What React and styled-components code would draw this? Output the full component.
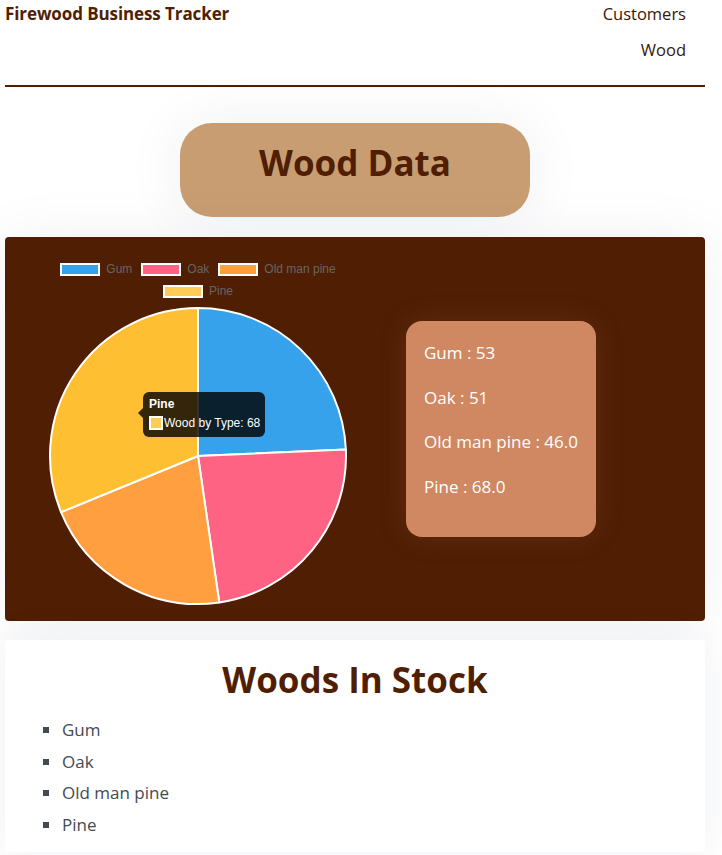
import React from 'react';
import styled, { createGlobalStyle } from 'styled-components';

const BROWN = '#4f1e03';

const GlobalStyle = createGlobalStyle`
  html, body {
    margin: 0;
    padding: 0;
    background: #ffffff;
  }
  body {
    font-family: "Open Sans", "Noto Sans", sans-serif;
    color: #222;
  }
`;

const Page = styled.div`
  width: 700px;
  margin-left: 5px;
  padding-bottom: 40px;
`;

const Header = styled.header`
  display: flex;
  justify-content: space-between;
  align-items: flex-start;
  border-bottom: 2px solid ${BROWN};
  padding-bottom: 21px;
`;

const Brand = styled.div`
  font-size: 17px;
  font-weight: 700;
  line-height: 28px;
  color: ${BROWN};
  letter-spacing: -0.1px;
`;

const Nav = styled.nav`
  display: flex;
  flex-direction: column;
  align-items: flex-end;
  gap: 8px;
  padding-right: 19px;
`;

const NavLink = styled.a`
  font-size: 16.5px;
  line-height: 28px;
  color: #3a1606;
  text-decoration: none;
`;

const TitlePill = styled.h1`
  margin: 36px auto 20px;
  width: 350px;
  height: 94px;
  box-sizing: border-box;
  padding-bottom: 16px;
  border-radius: 32px;
  background: #c99d72;
  display: flex;
  align-items: center;
  justify-content: center;
  font-size: 35px;
  font-weight: 700;
  color: ${BROWN};
  box-shadow: 0 0 60px rgba(30, 40, 90, 0.07);
`;

const ChartPanel = styled.section`
  display: flex;
  align-items: center;
  background: ${BROWN};
  border-radius: 4px;
  height: 384px;
  box-shadow: 0 0 60px rgba(30, 40, 90, 0.06);
`;

const ChartBox = styled.div`
  position: relative;
  width: 386px;
  align-self: stretch;
  padding-top: 21px;
  display: flex;
  flex-direction: column;
  align-items: center;
`;

const Legend = styled.div`
  width: 300px;
  display: flex;
  flex-wrap: wrap;
  justify-content: center;
  column-gap: 9px;
`;

const LegendItem = styled.div`
  display: flex;
  align-items: center;
  gap: 6px;
  height: 22px;
  font-family: "Liberation Sans", Arial, sans-serif;
  font-size: 12px;
  color: #666;
`;

const Swatch = styled.span`
  width: 36px;
  height: 9px;
  border: 2px solid #fff;
  background: ${p => p.$color};
`;

const PieSvg = styled.svg`
  margin-top: 4px;
  display: block;
`;

const Tooltip = styled.div`
  position: absolute;
  left: 138px;
  top: 155px;
  width: 122px;
  height: 45px;
  box-sizing: border-box;
  padding: 5px 6px;
  border-radius: 6px;
  background: rgba(0, 0, 0, 0.8);
  font-family: "Liberation Sans", Arial, sans-serif;
  font-size: 12px;
  color: #fff;
  white-space: nowrap;

  &::before {
    content: '';
    position: absolute;
    left: -5px;
    top: 16px;
    border-top: 5px solid transparent;
    border-bottom: 5px solid transparent;
    border-right: 5px solid rgba(0, 0, 0, 0.8);
  }
`;

const TipTitle = styled.div`
  font-weight: 700;
  line-height: 14px;
  margin-bottom: 5px;
`;

const TipRow = styled.div`
  display: flex;
  align-items: center;
  line-height: 14px;
`;

const TipSwatch = styled.span`
  flex: none;
  width: 10px;
  height: 10px;
  border: 2px solid #fff;
  background: ${p => p.$color};
  margin-right: 1px;
`;

const InfoCard = styled.div`
  margin-left: 15px;
  width: 190px;
  height: 216px;
  box-sizing: border-box;
  padding: 20px 18px;
  border-radius: 16px;
  background: #cf8862;
  display: flex;
  flex-direction: column;
  gap: 20.6px;
  box-shadow: 0 0 30px rgba(207, 136, 98, 0.15);
`;

const InfoLine = styled.p`
  margin: 0;
  font-size: 17px;
  line-height: 24px;
  color: #fff;
`;

const StockCard = styled.section`
  margin-top: 19px;
  background: #fff;
  border-radius: 4px;
  padding: 18px 0 12px;
  box-shadow: 0 0 40px rgba(30, 40, 90, 0.07);
`;

const StockTitle = styled.h2`
  margin: 0 0 12px;
  text-align: center;
  font-size: 35px;
  line-height: 44px;
  font-weight: 700;
  color: ${BROWN};
`;

const StockList = styled.ul`
  margin: 0;
  padding-left: 57px;
  list-style: square;
`;

const StockItem = styled.li`
  font-size: 17px;
  line-height: 31.5px;
  color: #444a52;

  &::marker {
    color: #444a52;
  }
`;

const woods = [
  { name: 'Gum', value: 53, color: '#36a2eb' },
  { name: 'Oak', value: 51, color: '#ff6384' },
  { name: 'Old man pine', value: 46, color: '#ff9f40' },
  { name: 'Pine', value: 68, color: '#ffcd56', hover: '#ffbf33' },
];

function slicePath(cx, cy, r, a0, a1) {
  const toXY = a => [cx + r * Math.sin(a), cy - r * Math.cos(a)];
  const [x0, y0] = toXY(a0);
  const [x1, y1] = toXY(a1);
  const large = a1 - a0 > Math.PI ? 1 : 0;
  return `M${cx},${cy} L${x0},${y0} A${r},${r} 0 ${large} 1 ${x1},${y1} Z`;
}

function Pie() {
  const total = woods.reduce((s, w) => s + w.value, 0);
  let start = 0;
  return (
    <PieSvg width="300" height="300" viewBox="0 0 300 300">
      {woods.map(w => {
        const end = start + (w.value / total) * Math.PI * 2;
        const d = slicePath(150, 150, 148, start, end);
        start = end;
        return (
          <path key={w.name} d={d} fill={w.hover || w.color} stroke="#fff" strokeWidth="2" strokeLinejoin="round" />
        );
      })}
    </PieSvg>
  );
}

export default function App() {
  return (
    <Page>
      <GlobalStyle />
      <Header>
        <Brand>Firewood Business Tracker</Brand>
        <Nav>
          <NavLink href="#">Customers</NavLink>
          <NavLink href="#">Wood</NavLink>
        </Nav>
      </Header>

      <TitlePill>Wood Data</TitlePill>

      <ChartPanel>
        <ChartBox>
          <Legend>
            {woods.map(w => (
              <LegendItem key={w.name}>
                <Swatch $color={w.color} />
                {w.name}
              </LegendItem>
            ))}
          </Legend>
          <Pie />
          <Tooltip>
            <TipTitle>Pine</TipTitle>
            <TipRow>
              <TipSwatch $color="#ffcd56" />
              Wood by Type: 68
            </TipRow>
          </Tooltip>
        </ChartBox>
        <InfoCard>
          <InfoLine>Gum : 53</InfoLine>
          <InfoLine>Oak : 51</InfoLine>
          <InfoLine>Old man pine : 46.0</InfoLine>
          <InfoLine>Pine : 68.0</InfoLine>
        </InfoCard>
      </ChartPanel>

      <StockCard>
        <StockTitle>Woods In Stock</StockTitle>
        <StockList>
          {woods.map(w => (
            <StockItem key={w.name}>{w.name}</StockItem>
          ))}
        </StockList>
      </StockCard>
    </Page>
  );
}
